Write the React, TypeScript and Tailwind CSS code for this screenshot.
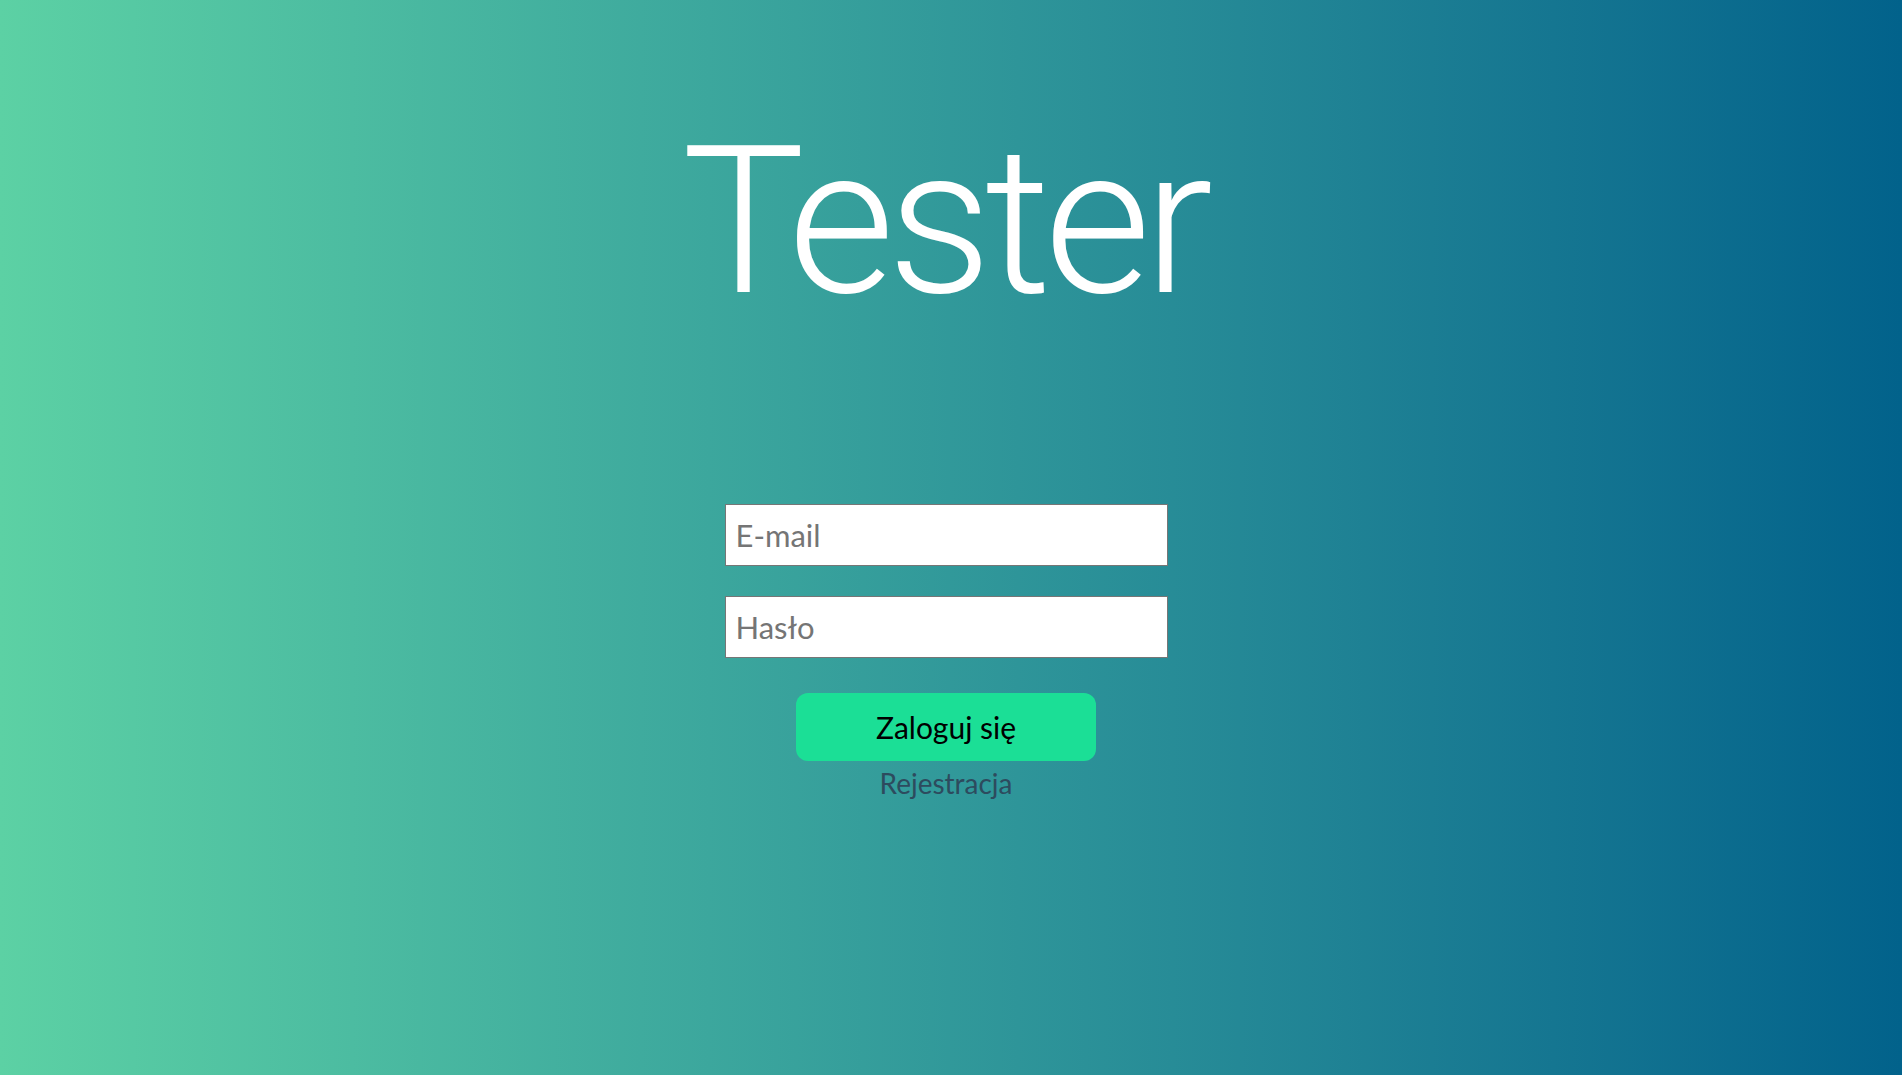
const App = () => {
  return (
    <div className="min-h-screen w-full bg-gradient-to-r from-[#5cd1a4] to-[#02628b] flex flex-col items-center font-['Lato',sans-serif]">
      {/* Title */}
      <h1 className="mt-[98px] pr-[14px] text-white text-[206px] leading-[1.2] font-light tracking-[-7px] font-['Roboto',sans-serif]">
        Tester
      </h1>

      {/* Login form */}
      <form className="mt-[159px] pr-[10px] flex flex-col items-center">
        <input
          type="email"
          placeholder="E-mail"
          className="w-[443px] h-[62px] bg-white border border-[#767676] px-[10px] text-[31px] text-black placeholder:text-[#757575] outline-none"
        />
        <input
          type="password"
          placeholder="Hasło"
          className="mt-[30px] w-[443px] h-[62px] bg-white border border-[#767676] px-[10px] text-[31px] text-black placeholder:text-[#757575] outline-none"
        />
        <button
          type="button"
          className="mt-[35px] w-[300px] h-[68px] rounded-[12px] bg-[#1bdf96] text-black text-[30px]"
        >
          Zaloguj się
        </button>
        <a href="#" className="mt-[4px] text-[28px] leading-[1.3] text-[#2d4b5e]">
          Rejestracja
        </a>
      </form>
    </div>
  );
};

export default App;
